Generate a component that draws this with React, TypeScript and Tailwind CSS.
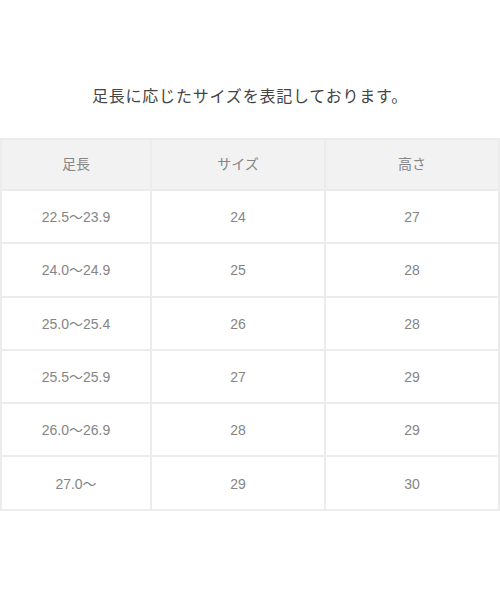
const rows = [
  { foot: "22.5〜23.9", size: "24", height: "27" },
  { foot: "24.0〜24.9", size: "25", height: "28" },
  { foot: "25.0〜25.4", size: "26", height: "28" },
  { foot: "25.5〜25.9", size: "27", height: "29" },
  { foot: "26.0〜26.9", size: "28", height: "29" },
  { foot: "27.0〜", size: "29", height: "30" },
];

const App = () => {
  return (
    <div
      className="w-[500px] h-[600px] bg-white pt-[85px]"
      style={{ fontFamily: '"Liberation Sans", "Noto Sans CJK JP", sans-serif' }}
    >
      <p className="text-center text-[16px] leading-[24px] text-[#444444] tracking-[0.8px]">
        足長に応じたサイズを表記しております。
      </p>

      <table className="mt-[29px] w-full border-collapse table-fixed text-[14px] text-[#858585]">
        <colgroup>
          <col className="w-[150px]" />
          <col className="w-[174px]" />
          <col />
        </colgroup>
        <thead>
          <tr className="bg-[#f2f2f2] h-[51px]">
            <th className="border-2 border-[#ececec] font-normal">足長</th>
            <th className="border-2 border-[#ececec] font-normal">サイズ</th>
            <th className="border-2 border-[#ececec] font-normal">高さ</th>
          </tr>
        </thead>
        <tbody>
          {rows.map((row) => (
            <tr key={row.foot} className="h-[53.3px]">
              <td className="border-2 border-[#ececec] text-center pt-[2px]">{row.foot}</td>
              <td className="border-2 border-[#ececec] text-center pt-[2px]">{row.size}</td>
              <td className="border-2 border-[#ececec] text-center pt-[2px]">{row.height}</td>
            </tr>
          ))}
        </tbody>
      </table>
    </div>
  );
};

export default App;
